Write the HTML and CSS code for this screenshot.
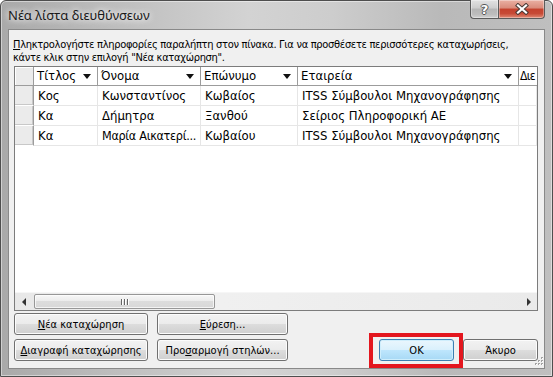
FILE: index.html
```html
<!DOCTYPE html>
<html lang="el">
<head>
  <meta charset="UTF-8" />
  <title>Νέα λίστα διευθύνσεων</title>
  <link rel="stylesheet" href="styles.css">
</head>
<body>
  <div class="window">
    <div class="titlebar">
      <span class="title">Νέα λίστα διευθύνσεων</span>
      <div class="caption-buttons">
        <span class="cap help">?</span>
        <span class="cap close">
          <svg width="14" height="12" viewBox="0 0 14 12">
            <path d="M3 2.5 L11 9.5 M11 2.5 L3 9.5" stroke="#4b3a36" stroke-width="4.2" stroke-linecap="square" fill="none"/>
            <path d="M3 2.5 L11 9.5 M11 2.5 L3 9.5" stroke="#fff" stroke-width="2.2" stroke-linecap="square" fill="none"/>
          </svg>
        </span>
      </div>
    </div>

    <div class="client">
      <p class="intro"><u>Π</u>ληκτρολογήστε πληροφορίες παραλήπτη στον πίνακα. Για να προσθέσετε περισσότερες καταχωρήσεις,<br>κάντε κλικ στην επιλογή "Νέα καταχώρηση".</p>

      <div class="grid">
        <div class="rows">
          <div class="row head">
            <div class="cell rowhead"></div>
            <div class="cell sort">Τίτλος</div>
            <div class="cell sort">Όνομα</div>
            <div class="cell sort">Επώνυμο</div>
            <div class="cell sort">Εταιρεία</div>
            <div class="cell last">Διε</div>
          </div>
          <div class="row">
            <div class="cell rowhead"></div>
            <div class="cell">Κος</div>
            <div class="cell">Κωνσταντίνος</div>
            <div class="cell">Κωβαίος</div>
            <div class="cell">ITSS Σύμβουλοι Μηχανογράφησης</div>
            <div class="cell"></div>
          </div>
          <div class="row">
            <div class="cell rowhead"></div>
            <div class="cell">Κα</div>
            <div class="cell">Δήμητρα</div>
            <div class="cell">Ξανθού</div>
            <div class="cell">Σείριος Πληροφορική ΑΕ</div>
            <div class="cell"></div>
          </div>
          <div class="row">
            <div class="cell rowhead"></div>
            <div class="cell">Κα</div>
            <div class="cell tight">Μαρία Αικατερί...</div>
            <div class="cell">Κωβαίου</div>
            <div class="cell">ITSS Σύμβουλοι Μηχανογράφησης</div>
            <div class="cell"></div>
          </div>
        </div>

        <div class="hscroll">
          <span class="arrow left"></span>
          <span class="thumb"><span class="grip-lines"><i></i><i></i><i></i></span></span>
          <span class="track"></span>
          <span class="arrow right"></span>
        </div>
      </div>

      <div class="bottom">
        <div class="actions">
          <button class="btn"><u>Ν</u>έα καταχώρηση</button>
          <button class="btn"><u>Ε</u>ύρεση...</button>
          <button class="btn"><u>Δ</u>ιαγραφή καταχώρησης</button>
          <button class="btn">Προ<u>σ</u>αρμογή στηλών...</button>
        </div>
        <div class="dialog-buttons">
          <button class="btn ok">OK</button>
          <button class="btn">Άκυρο</button>
        </div>
      </div>

      <svg class="size-grip" width="11" height="11" viewBox="0 0 11 11">
        <g fill="#a3a3a3">
          <rect x="8" y="0" width="2" height="2"/>
          <rect x="5" y="3" width="2" height="2"/><rect x="8" y="3" width="2" height="2"/>
          <rect x="2" y="6" width="2" height="2"/><rect x="5" y="6" width="2" height="2"/><rect x="8" y="6" width="2" height="2"/>
        </g>
        <g fill="#fff">
          <rect x="9" y="1" width="1" height="1"/>
          <rect x="6" y="4" width="1" height="1"/><rect x="9" y="4" width="1" height="1"/>
          <rect x="3" y="7" width="1" height="1"/><rect x="6" y="7" width="1" height="1"/><rect x="9" y="7" width="1" height="1"/>
        </g>
      </svg>
    </div>
  </div>
</body>
</html>
```

FILE: styles.css
```css
body {
  margin: 0;
  background: #fff;
  font-family: "DejaVu Sans Condensed", "Liberation Sans", sans-serif;
  font-size: 11px;
  color: #000;
}

.window {
  width: 553px;
  height: 377px;
  box-sizing: border-box;
  border: 1px solid #4e4e4e;
  border-radius: 6px 6px 0 0;
  padding: 0 7px 7px;
  display: flex;
  flex-direction: column;
  background: linear-gradient(90deg, #a9a9a9 0%, #bdbdbd 20%, #d3d3d3 45%, #cdcdcd 60%, #b9b9b9 80%, #bfbfbf 100%);
  box-shadow: inset 0 0 0 1px rgba(255, 255, 255, 0.45);
}

/* title bar */
.titlebar {
  height: 28px;
  display: flex;
  align-items: flex-start;
}

.title {
  font-family: "Noto Sans", "Open Sans", sans-serif;
  font-size: 13px;
  line-height: 28px;
  color: #1a1a1a;
  text-shadow: 0 0 6px #fff, 0 0 10px rgba(255, 255, 255, 0.8);
}

.caption-buttons {
  margin-left: auto;
  margin-top: -1px;
  display: flex;
}

.cap {
  height: 19px;
  box-sizing: border-box;
  border: 1px solid #5b5b5b;
  border-top: none;
  display: flex;
  align-items: center;
  justify-content: center;
  box-shadow: inset 0 0 0 1px rgba(255, 255, 255, 0.35);
}

.help {
  width: 28px;
  border-right: none;
  border-radius: 0 0 0 4px;
  background: linear-gradient(#e2e2e2 0%, #cdcdcd 45%, #b5b5b5 50%, #bdbdbd 80%, #d0d0d0 100%);
  font-family: "DejaVu Sans", sans-serif;
  font-weight: bold;
  font-size: 13px;
  color: #fff;
  text-shadow: 1px 0 #555, -1px 0 #555, 0 1px #555, 0 -1px #555;
}

.close {
  width: 47px;
  border-radius: 0 0 4px 0;
  background: linear-gradient(#eab0a3 0%, #d98a7a 45%, #c4412d 50%, #c74a36 75%, #e08a74 100%);
}

/* client area */
.client {
  flex: 1;
  position: relative;
  display: flex;
  flex-direction: column;
  padding: 8px 6px 7px 4px;
  background: #f0f0f0;
  border: 1px solid #898989;
}

.intro {
  margin: 0;
  line-height: 13px;
  letter-spacing: -0.3px;
  white-space: nowrap;
}

u {
  text-underline-offset: 1px;
}

/* data grid */
.grid {
  flex: 1;
  margin: 2px 0 0 1px;
  display: flex;
  flex-direction: column;
  overflow: hidden;
  background: #fff;
  border: 1px solid #7c7c7c;
}

.rows {
  flex: 1;
}

.row {
  display: grid;
  grid-template-columns: 19px 64px 103px 97px 221px 1fr;
  height: 20px;
}

.cell {
  box-sizing: border-box;
  padding: 0 3px 0 4px;
  border-right: 1px solid #e6e6e6;
  border-bottom: 1px solid #e6e6e6;
  font-size: 13px;
  line-height: 19px;
  white-space: nowrap;
  overflow: hidden;
}

.cell.tight {
  padding-right: 0;
  font-size: 12.5px;
  letter-spacing: -0.3px;
}

.row.head {
  height: 19px;
}

.head .cell {
  line-height: 18px;
  border-right-color: #9c9c9c;
  border-bottom-color: #9c9c9c;
  padding-left: 3px;
}

.head .cell.last {
  padding: 0 0 0 1px;
  letter-spacing: -0.6px;
  font-size: 12px;
  border-right: none;
}

.cell.rowhead {
  padding: 0;
  background: #ebebeb;
  border-right-color: #9c9c9c;
  border-bottom-color: #fff;
  box-shadow: inset -1px -1px #c8c8c8;
}

.head .cell.rowhead {
  border-bottom-color: #9c9c9c;
  box-shadow: inset 1px 1px #fff;
}

.cell.sort {
  display: flex;
  align-items: center;
  justify-content: space-between;
  padding-right: 6px;
}

.cell.sort::after {
  content: "";
  width: 0;
  height: 0;
  border-left: 4px solid transparent;
  border-right: 4px solid transparent;
  border-top: 5px solid #111;
}

/* horizontal scroll bar */
.hscroll {
  height: 17px;
  display: flex;
  background: linear-gradient(90deg, #e8e8e8, #f1f1f1 30%, #eaeaea);
  border-top: 1px solid #f6f6f6;
}

.arrow {
  width: 17px;
  flex: 0 0 17px;
  display: flex;
  align-items: center;
  justify-content: center;
}

.arrow::before {
  content: "";
  width: 0;
  height: 0;
  border-top: 4px solid transparent;
  border-bottom: 4px solid transparent;
}

.arrow.left::before {
  border-right: 4px solid #333;
}

.arrow.right::before {
  border-left: 4px solid #333;
}

.thumb {
  flex: 0 0 181px;
  margin: 1px 0 1px 2px;
  box-sizing: border-box;
  border: 1px solid #979797;
  border-radius: 2px;
  background: linear-gradient(#f7f7f7 0%, #ececec 45%, #dcdcdc 50%, #d8d8d8 100%);
  box-shadow: inset 0 0 0 1px rgba(255, 255, 255, 0.7);
  display: flex;
  align-items: center;
  justify-content: center;
}

.grip-lines {
  display: flex;
  gap: 2px;
}

.grip-lines i {
  width: 1px;
  height: 6px;
  background: #666;
  box-shadow: 1px 0 #fff;
}

.track {
  flex: 1;
}

/* buttons */
.bottom {
  display: flex;
  align-items: flex-end;
  margin-top: 2px;
}

.actions {
  margin-left: 1px;
  display: grid;
  grid-template-columns: 134px 131px;
  gap: 4px 9px;
}

.dialog-buttons {
  margin-left: auto;
  display: flex;
  gap: 9px;
}

.dialog-buttons .btn {
  width: 75px;
}

.btn {
  height: 22px;
  box-sizing: border-box;
  padding: 0;
  border: 1px solid #707070;
  border-radius: 3px;
  background: linear-gradient(#f2f2f2 0%, #ebebeb 50%, #dddddd 51%, #cfcfcf 100%);
  box-shadow: inset 0 0 0 1px #fcfcfc;
  font-family: inherit;
  font-size: 11px;
  color: #000;
}

.btn.ok {
  position: relative;
  border-color: #3c7fb1;
  background: linear-gradient(#eaf6fd 0%, #d9f0fc 50%, #bee6fd 51%, #a7d9f5 100%);
  box-shadow: inset 0 0 0 1px #cfeefc;
}

/* red highlight drawn over the default button */
.btn.ok::after {
  content: "";
  position: absolute;
  top: -7px;
  bottom: -8px;
  left: -11px;
  right: -10px;
  border: 4px solid #e3161e;
}

.size-grip {
  position: absolute;
  right: 0;
  bottom: 0;
}
```
